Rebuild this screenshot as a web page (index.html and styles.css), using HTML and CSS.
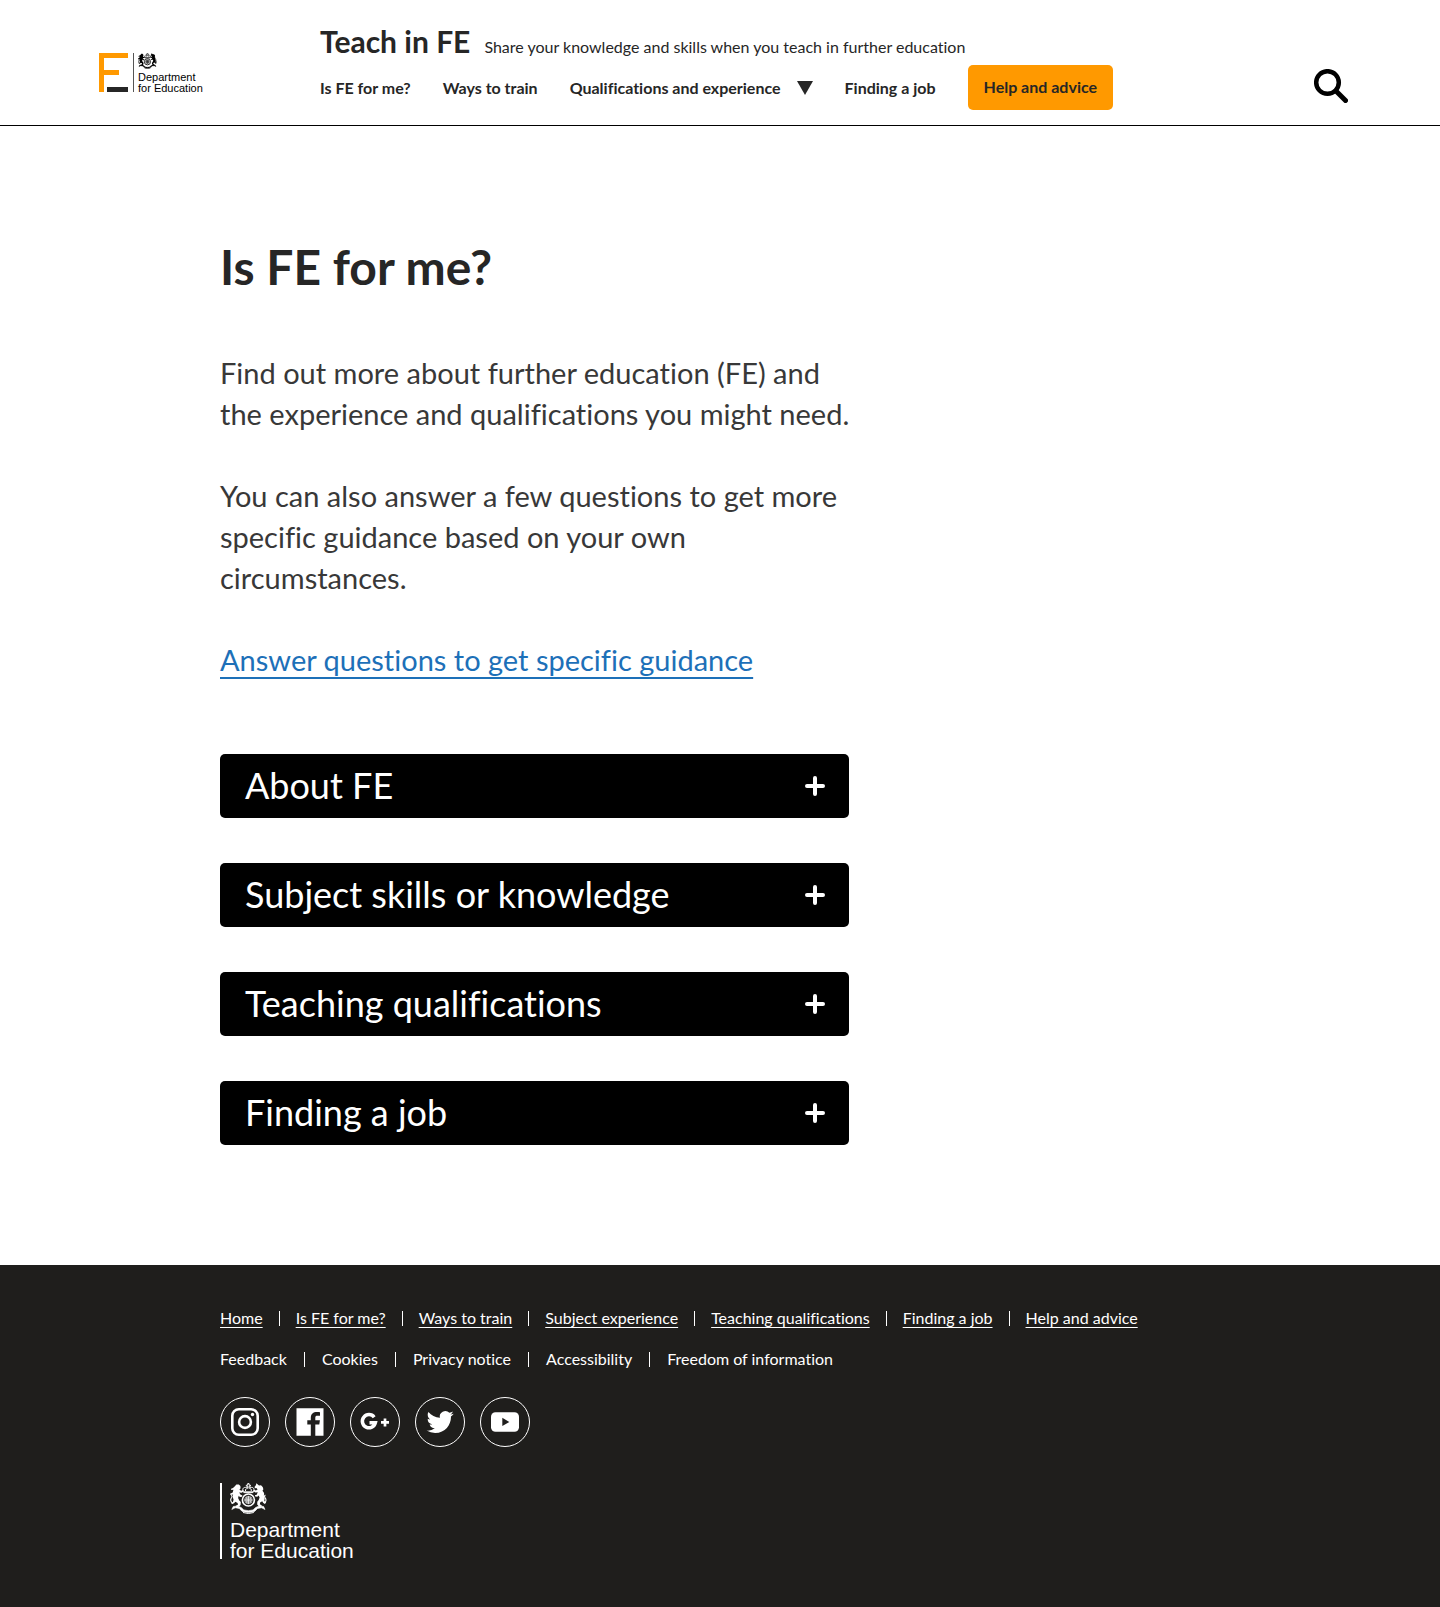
FILE: index.html
```html
<!DOCTYPE html>
<html lang="en">
<head>
<meta charset="utf-8">
<meta name="viewport" content="width=device-width, initial-scale=1">
<title>Is FE for me? - Teach in FE</title>
<link rel="stylesheet" href="styles.css">
</head>
<body>
<svg class="sprite" aria-hidden="true">
  <symbol id="crest" viewBox="0 0 37 31">
    <!-- crown -->
    <path d="M13.4 8.8c-1.4-2.6-.2-4.6 2-4.4 1 0 1.800.4 2.300 1V3.200h-1.400V2.200h1.400V.6h1.400v1.600h1.400v1h-1.400v2.200c.6-.6 1.400-1 2.300-1 2.200-.2 3.400 1.800 2 4.400z" fill="none" stroke="currentColor" stroke-width="1"/>
    <path d="M13.500 9.600h9.800M15.600 8c-.4-1.600 0-2.400 1.200-2.200M21.200 8c.4-1.600 0-2.400-1.200-2.200" fill="none" stroke="currentColor" stroke-width="1"/>
    <!-- garter and shield -->
    <circle cx="18.400" cy="17" r="6" fill="none" stroke="currentColor" stroke-width="1.600"/>
    <circle cx="18.400" cy="17" r="4.200" fill="currentColor" opacity=".5"/>
    <path d="M18.400 13v8M14.400 17h8M15.800 14.500l1.400 1M20 15.500l1.400-1M15.800 19.500l1.400-1M20 18.500l1.400 1" stroke="currentColor" stroke-width=".8"/>
    <!-- lion -->
    <path d="M4.600 3.600 6.400 1.500l2.400-.1 1.600 1.700.2 2.200-1.200 1.500 1.900.9 1.900-.6.5 1.200-2 1.500-2.600-.3 1.800 2.600 1.400.2-.2 1.500-2.200.1-1.200-1.200-.6 2.200 1.200 2.600 1.500 1.600-.2 2.800-1.600 1.800-2.800.3-.2-1.200 1.900-1.100-.3-1.800-2.300-1.200-1.200 1.600-2.200.7-.600-1.100 1.600-1 .7-2.200-.9-2.700.4-2.600-2.600.6-.5-1.300 2.700-1.300.7-2.600-2.200.2-.1-1.300 1.900-.8z" fill="currentColor"/>
    <path d="M2.800 20.500C.8 19 .2 16.500 1.600 14.500c.8-1.200.4-2-.6-2.600" fill="none" stroke="currentColor" stroke-width="1.100"/>
    <!-- unicorn -->
    <path d="M26.300.2l2.700 2.300 2-.2 1.700 1.600.7 2.300-.9 1.500 1.600 2.200-.2 2.800.8 2.600-.4 2.700 1.700 1.300-.5 1.200-2.200-.6-1.100-1.700-2.100 1.300-.2 1.800 1.900 1.200-.2 1.200-2.900-.4-1.500-1.900.1-2.700 1.400-1.600.9-2.600-1-1.900-1.300 1.100-2.100-.2-.2-1.400 1.500-.2 1.300-2.600-2.500.2-2-1.600.6-1.200 2 .7 1.700-.8-1.200-1.500-1.400.2-.5-1.200 1.500-2z" fill="currentColor"/>
    <path d="M34 20.500c2-1.500 2.400-4 1-6-.8-1.200-.4-2 .4-2.600" fill="none" stroke="currentColor" stroke-width="1.100"/>
    <!-- motto scroll -->
    <path d="M1.800 26.500l3.400-1.700 4 .6 3 3 6.200 1.200 6.200-1.200 3-3 4-.6 3.400 1.700-1.400-3-4.400-.6-3.600 1.600-2.600 2.400-4.600.8-4.600-.8-2.600-2.400-3.600-1.600-4.400.6z" fill="currentColor" stroke="currentColor" stroke-width=".6"/>
    <path d="M13 29.500q5.400 2 10.800 0" fill="none" stroke="currentColor" stroke-width="1"/>
  </symbol>
</svg>

<header class="header">
  <a class="brand" href="#" aria-label="Department for Education">
    <svg class="brand-mark" viewBox="0 0 29 39" aria-hidden="true">
      <path d="M0 0h29v5H5v12h15v5H5v17H0z" fill="#ff9900"/>
      <path d="M8 34h21v5H8z" fill="#262626"/>
    </svg>
    <span class="brand-dept">
      <svg class="brand-crest" aria-hidden="true"><use href="#crest"/></svg>
      <span>Department<br>for Education</span>
    </span>
  </a>
  <div class="header-main">
    <div class="title-row">
      <a class="site-title" href="#">Teach in FE</a>
      <span class="tagline">Share your knowledge and skills when you teach in further education</span>
    </div>
    <nav class="nav" aria-label="Main">
      <a href="#">Is FE for me?</a>
      <a href="#">Ways to train</a>
      <a class="nav-more" href="#">Qualifications and experience
        <svg class="triangle" viewBox="0 0 16 14" aria-hidden="true"><path d="M0 0h16L8 14z" fill="currentColor"/></svg>
      </a>
      <a href="#">Finding a job</a>
      <a class="nav-help" href="#">Help and advice</a>
    </nav>
  </div>
  <button class="search" type="button" aria-label="Search">
    <svg viewBox="0 0 34 34" aria-hidden="true" fill="none" stroke="#000">
      <circle cx="13.500" cy="13.500" r="11.300" stroke-width="4.500"/>
      <path d="M22 22l9.500 9.500" stroke-width="5" stroke-linecap="round"/>
    </svg>
  </button>
</header>

<main class="main">
  <h1>Is FE for me?</h1>
  <div class="intro">
    <p>Find out more about further education (FE) and the experience and qualifications you might need.</p>
    <p>You can also answer a few questions to get more specific guidance based on your own circumstances.</p>
    <p><a href="#">Answer questions to get specific guidance</a></p>
  </div>
  <div class="accordion">
    <button type="button" aria-expanded="false"><span>About FE</span>
      <svg viewBox="0 0 20 20" aria-hidden="true"><path d="M10 2v16M2 10h16"/></svg></button>
    <button type="button" aria-expanded="false"><span>Subject skills or knowledge</span>
      <svg viewBox="0 0 20 20" aria-hidden="true"><path d="M10 2v16M2 10h16"/></svg></button>
    <button type="button" aria-expanded="false"><span>Teaching qualifications</span>
      <svg viewBox="0 0 20 20" aria-hidden="true"><path d="M10 2v16M2 10h16"/></svg></button>
    <button type="button" aria-expanded="false"><span>Finding a job</span>
      <svg viewBox="0 0 20 20" aria-hidden="true"><path d="M10 2v16M2 10h16"/></svg></button>
  </div>
</main>

<footer class="footer">
  <ul class="links links-main">
    <li><a href="#">Home</a></li>
    <li><a href="#">Is FE for me?</a></li>
    <li><a href="#">Ways to train</a></li>
    <li><a href="#">Subject experience</a></li>
    <li><a href="#">Teaching qualifications</a></li>
    <li><a href="#">Finding a job</a></li>
    <li><a href="#">Help and advice</a></li>
  </ul>
  <ul class="links">
    <li><a href="#">Feedback</a></li>
    <li><a href="#">Cookies</a></li>
    <li><a href="#">Privacy notice</a></li>
    <li><a href="#">Accessibility</a></li>
    <li><a href="#">Freedom of information</a></li>
  </ul>
  <div class="social">
    <a href="#" aria-label="Instagram"><svg viewBox="0 0 50 50" aria-hidden="true">
      <rect x="12.300" y="12.300" width="25.400" height="25.400" rx="6.500" fill="none" stroke="#fff" stroke-width="2.600"/>
      <circle cx="25" cy="25" r="5.900" fill="none" stroke="#fff" stroke-width="2.600"/>
      <circle cx="32.500" cy="17.500" r="1.700" fill="#fff"/></svg></a>
    <a href="#" aria-label="Facebook"><svg viewBox="0 0 50 50" aria-hidden="true">
      <path fill="#fff" d="M11.500 11.200h27v27.600h-4.400v0h-3.800V27.400h4l.6-4.200h-4.600v-2.500c0-1.300.6-1.900 2-1.900h2.700v-3.600c-.7-.1-1.800-.2-3-.2-3.800 0-6.200 2-6.200 5.800v2.400h-3.500v4.200h3.500v11.400H11.500z"/></svg></a>
    <a href="#" aria-label="Google Plus"><svg viewBox="0 0 50 50" aria-hidden="true">
      <path fill="none" stroke="#fff" stroke-width="3.500" d="M24.200 20.200a6.600 6.600 0 1 0 1.200 5.500H19.500"/>
      <path fill="none" stroke="#fff" stroke-width="2.700" d="M35 21.400v8M31 25.400h8"/></svg></a>
    <a href="#" aria-label="Twitter"><svg viewBox="0 0 50 50" aria-hidden="true">
      <path fill="#fff" transform="translate(11.600 11.500) scale(1.130)" d="M23.953 4.570a10 10 0 01-2.825.775 4.958 4.958 0 002.163-2.723c-.951.555-2.005.959-3.127 1.184a4.920 4.920 0 00-8.384 4.482C7.690 8.095 4.067 6.130 1.640 3.162a4.822 4.822 0 00-.666 2.475c0 1.710.870 3.213 2.188 4.096a4.904 4.904 0 01-2.228-.616v.060a4.923 4.923 0 003.946 4.827 4.996 4.996 0 01-2.212.085 4.936 4.936 0 004.604 3.417 9.867 9.867 0 01-6.102 2.105c-.390 0-.779-.023-1.170-.067a13.995 13.995 0 007.557 2.209c9.053 0 13.998-7.496 13.998-13.985 0-.210 0-.420-.015-.630A9.935 9.935 0 0024 4.590z"/></svg></a>
    <a href="#" aria-label="YouTube"><svg viewBox="0 0 50 50" aria-hidden="true">
      <rect x="11" y="15.200" width="28" height="19.600" rx="4.500" fill="#fff"/>
      <path d="M22.300 20.800v8.200l7-4.100z" fill="#1f1e1c"/></svg></a>
  </div>
  <a class="footer-dept" href="#">
    <svg class="footer-crest" aria-hidden="true"><use href="#crest"/></svg>
    <span>Department<br>for Education</span>
  </a>
</footer>
</body>
</html>
```
FILE: styles.css
```css
* { box-sizing: border-box; }

body {
  margin: 0;
  background: #fff;
  color: #262626;
  font-family: Lato, "Liberation Sans", sans-serif;
  font-size: 16px;
  line-height: 20px;
  font-variant-ligatures: no-common-ligatures;
}

a { color: inherit; text-decoration: none; }
svg { display: block; flex: none; }
button { border: 0; cursor: pointer; font: inherit; }
.sprite { position: absolute; width: 0; height: 0; }

/* Header */
.header {
  display: grid;
  grid-template-columns: 221px 1fr auto;
  align-items: start;
  padding: 23px 92px 15px 99px;
  border-bottom: 1px solid #000;
}

.brand {
  display: flex;
  align-items: flex-start;
  gap: 5px;
  padding-top: 30px;
}
.brand-mark { width: 29px; height: 39px; }
.brand-dept {
  display: flex;
  flex-direction: column;
  gap: 3px;
  height: 39px;
  padding-left: 4px;
  border-left: 1px solid #555;
  color: #000;
  font: 11px/11px "Liberation Sans", Arial, sans-serif;
}
.brand-crest { width: 19px; height: 16px; }

.header-main { display: flex; flex-direction: column; gap: 6px; }
.title-row { display: flex; align-items: baseline; gap: 14px; height: 36px; }
.site-title { font-size: 30px; line-height: 36px; font-weight: 700; }

.nav {
  display: flex;
  align-items: center;
  gap: 32px;
  font-weight: 700;
  white-space: nowrap;
}
.nav-more { display: flex; align-items: center; gap: 16px; }
.triangle { width: 16px; height: 14px; }
.nav-help {
  padding: 12px 16px 13px;
  border-radius: 5px;
  background: #ff9900;
}

.search { margin-top: 46px; padding: 0; background: none; }
.search svg { width: 34px; height: 34px; }

/* Page content */
.main { padding: 112px 220px 120px; }

h1 {
  margin: 0 0 56px;
  font-size: 48px;
  line-height: 58px;
  font-weight: 700;
}

.intro {
  display: flex;
  flex-direction: column;
  gap: 41px;
  max-width: 640px;
  color: #383838;
  font-size: 29px;
  line-height: 41px;
}
.intro p { margin: 0; }
.intro a {
  color: #1d70b8;
  text-decoration: underline;
  text-decoration-thickness: 2px;
  text-decoration-skip-ink: none;
  text-underline-offset: 6px;
}

.accordion {
  display: flex;
  flex-direction: column;
  gap: 45px;
  max-width: 629px;
  margin-top: 74px;
}
.accordion button {
  display: flex;
  align-items: center;
  justify-content: space-between;
  padding: 0 24px 0 25px;
  border-radius: 5px;
  background: #000;
  color: #fff;
  font-size: 36px;
  line-height: 62px;
  text-align: left;
}
.accordion span { padding-bottom: 2px; }
.accordion svg {
  width: 20px;
  height: 20px;
  fill: none;
  stroke: #fff;
  stroke-width: 4px;
  stroke-linecap: round;
}

/* Footer */
.footer {
  padding: 43px 220px 45px;
  background: #1f1e1c;
  color: #fff;
}

.links {
  display: flex;
  flex-wrap: wrap;
  margin: 0 0 21px;
  padding: 0;
  list-style: none;
  white-space: nowrap;
}
.links li { display: flex; align-items: center; }
.links li + li::before {
  content: "";
  width: 1px;
  height: 15px;
  margin: 0 17px;
  background: #fff;
}
.links-main li + li::before { margin: 0 16px; }
.links-main a {
  text-decoration: underline;
  text-decoration-thickness: 1px;
  text-decoration-skip-ink: none;
  text-underline-offset: 3px;
}

.social { display: flex; gap: 15px; margin: 28px 0 36px; }
.social a {
  width: 50px;
  height: 50px;
  border: 1px solid #fff;
  border-radius: 50%;
}
.social svg { width: 50px; height: 50px; margin: -1px; }

.footer-dept {
  display: inline-flex;
  flex-direction: column;
  gap: 5px;
  height: 76px;
  margin-bottom: 3px;
  padding-left: 8px;
  border-left: 2px solid #fff;
  font: 21px/21px "Liberation Sans", Arial, sans-serif;
}
.footer-crest { width: 37px; height: 31px; }
```
